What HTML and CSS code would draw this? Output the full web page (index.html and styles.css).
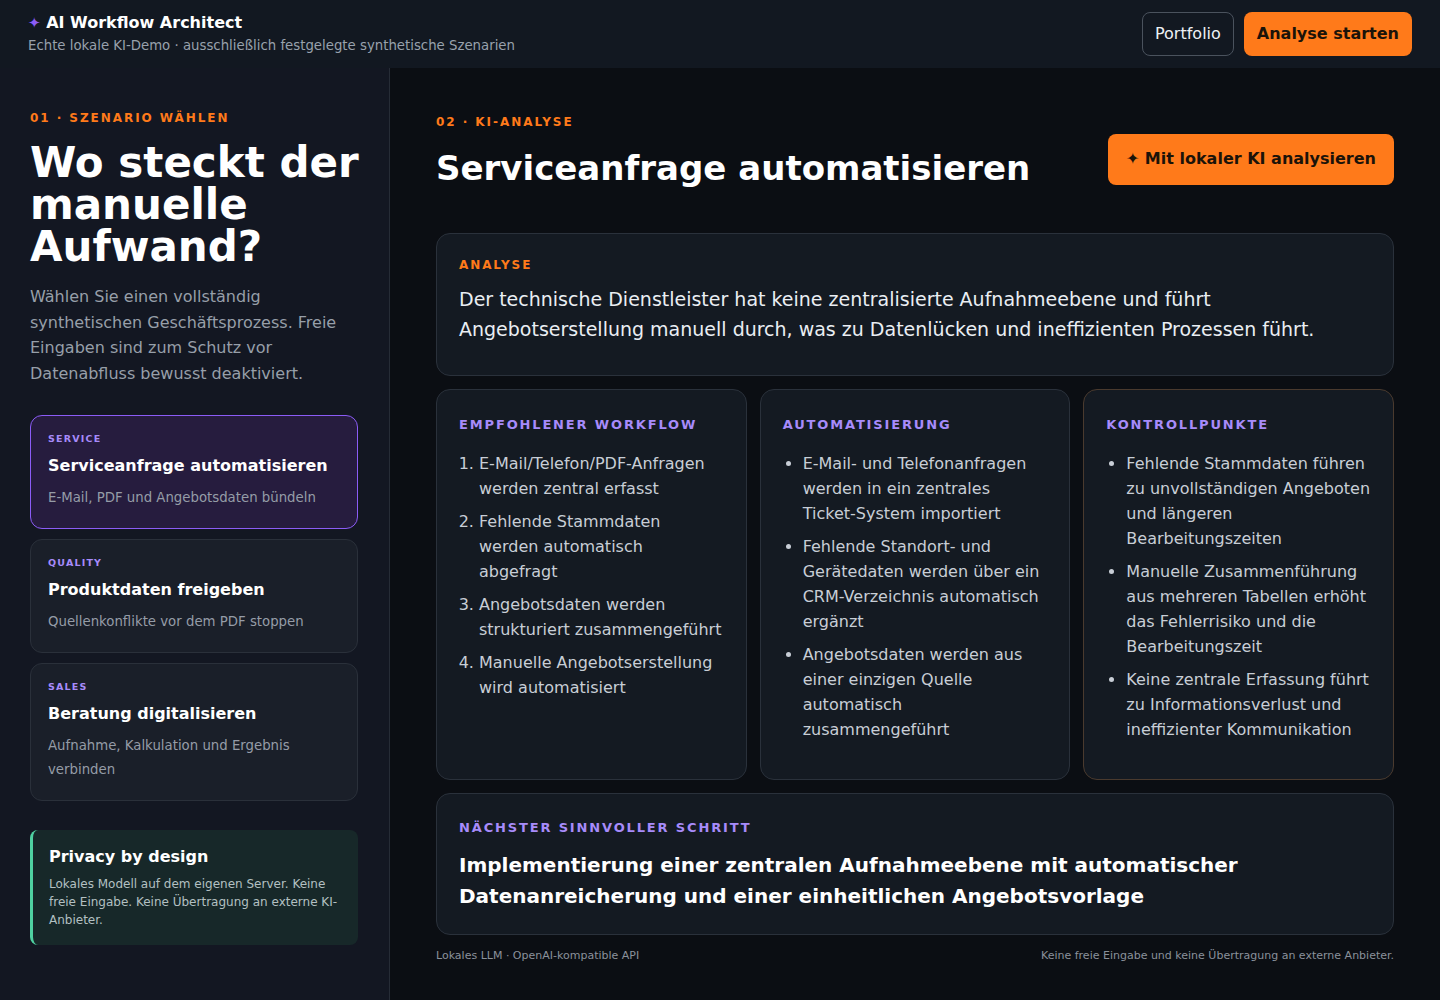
FILE: index.html
```html
<!DOCTYPE html>
<html lang="de">
<head>
    <meta charset="UTF-8">
    <meta name="viewport" content="width=device-width, initial-scale=1.0">
    <title>AI Workflow Architect</title>
    <link rel="stylesheet" href="styles.css">
</head>
<body>
    <header class="topbar">
        <div class="brand">
            <div class="brand-title"><span class="spark">✦</span> AI Workflow Architect</div>
            <div class="brand-sub">Echte lokale KI-Demo · ausschließlich festgelegte synthetische Szenarien</div>
        </div>
        <div class="top-actions">
            <a class="btn btn-ghost" href="#">Portfolio</a>
            <a class="btn btn-primary" href="#">Analyse starten</a>
        </div>
    </header>

    <div class="layout">
        <aside class="sidebar">
            <div class="eyebrow">01 · Szenario wählen</div>
            <h1>Wo steckt der manuelle Aufwand?</h1>
            <p class="lead">Wählen Sie einen vollständig synthetischen Geschäftsprozess. Freie Eingaben sind zum Schutz vor Datenabfluss bewusst deaktiviert.</p>

            <div class="scenarios">
                <div class="scenario active">
                    <div class="tag">Service</div>
                    <div class="scenario-title">Serviceanfrage automatisieren</div>
                    <div class="scenario-desc">E-Mail, PDF und Angebotsdaten bündeln</div>
                </div>
                <div class="scenario">
                    <div class="tag">Quality</div>
                    <div class="scenario-title">Produktdaten freigeben</div>
                    <div class="scenario-desc">Quellenkonflikte vor dem PDF stoppen</div>
                </div>
                <div class="scenario">
                    <div class="tag">Sales</div>
                    <div class="scenario-title">Beratung digitalisieren</div>
                    <div class="scenario-desc">Aufnahme, Kalkulation und Ergebnis verbinden</div>
                </div>
            </div>

            <div class="privacy">
                <div class="privacy-title">Privacy by design</div>
                <p>Lokales Modell auf dem eigenen Server. Keine freie Eingabe. Keine Übertragung an externe KI-Anbieter.</p>
            </div>
        </aside>

        <main class="main">
            <div class="main-head">
                <div>
                    <div class="eyebrow">02 · KI-Analyse</div>
                    <h2>Serviceanfrage automatisieren</h2>
                </div>
                <button class="btn btn-primary btn-big" type="button">✦ Mit lokaler KI analysieren</button>
            </div>

            <section class="card analysis">
                <div class="card-label orange">Analyse</div>
                <p>Der technische Dienstleister hat keine zentralisierte Aufnahmeebene und führt Angebotserstellung manuell durch, was zu Datenlücken und ineffizienten Prozessen führt.</p>
            </section>

            <div class="columns">
                <section class="card col">
                    <h3 class="card-label">Empfohlener Workflow</h3>
                    <ol>
                        <li>E-Mail/Telefon/PDF-Anfragen werden zentral erfasst</li>
                        <li>Fehlende Stammdaten werden automatisch abgefragt</li>
                        <li>Angebotsdaten werden strukturiert zusammengeführt</li>
                        <li>Manuelle Angebotserstellung wird automatisiert</li>
                    </ol>
                </section>
                <section class="card col">
                    <h3 class="card-label">Automatisierung</h3>
                    <ul>
                        <li>E-Mail- und Telefonanfragen werden in ein zentrales Ticket-System importiert</li>
                        <li>Fehlende Standort- und Gerätedaten werden über ein CRM-Verzeichnis automatisch ergänzt</li>
                        <li>Angebotsdaten werden aus einer einzigen Quelle automatisch zusammengeführt</li>
                    </ul>
                </section>
                <section class="card col warn">
                    <h3 class="card-label">Kontrollpunkte</h3>
                    <ul>
                        <li>Fehlende Stammdaten führen zu unvollständigen Angeboten und längeren Bearbeitungszeiten</li>
                        <li>Manuelle Zusammenführung aus mehreren Tabellen erhöht das Fehlerrisiko und die Bearbeitungszeit</li>
                        <li>Keine zentrale Erfassung führt zu Informationsverlust und ineffizienter Kommunikation</li>
                    </ul>
                </section>
            </div>

            <section class="card next">
                <div class="card-label">Nächster sinnvoller Schritt</div>
                <p>Implementierung einer zentralen Aufnahmeebene mit automatischer Datenanreicherung und einer einheitlichen Angebotsvorlage</p>
            </section>

            <footer class="foot">
                <span>Lokales LLM · OpenAI-kompatible API</span>
                <span>Keine freie Eingabe und keine Übertragung an externe Anbieter.</span>
            </footer>
        </main>
    </div>
</body>
</html>
```

FILE: styles.css
```css
* {
    box-sizing: border-box;
}
body {
    margin: 0;
    font-family: "DejaVu Sans", Verdana, sans-serif;
    background-color: #0b0e13; /* main canvas */
    color: #e8ecf1;
}

/* top bar */
.topbar {
    height: 68px;
    padding: 12px 28px 0 28px;
    display: flex;
    justify-content: space-between;
    align-items: flex-start;
    background-color: #121821;
}
.brand-title {
    font-size: 16px;
    font-weight: bold;
    line-height: 20px;
    margin-top: 1px;
    color: #ffffff;
}
.spark {
    color: #8b5cf6;
    font-size: 15px;
    font-weight: normal;
}
.brand-sub {
    margin-top: 4px;
    font-size: 13.3px;
    line-height: 18px;
    color: #98a1ac;
}
.top-actions {
    display: flex;
    gap: 10px;
}
.btn {
    display: inline-flex;
    align-items: center;
    height: 44px;
    padding: 0 12px 1px 12px;
    border-radius: 8px;
    font-family: inherit;
    font-size: 16px;
    line-height: 18px;
    text-decoration: none;
    cursor: pointer;
}
.btn-ghost {
    border: 1px solid #4a525d;
    color: #eef1f5;
}
.btn-primary {
    border: none;
    background-color: #ff7a1a;
    color: #1b1309;
    font-weight: bold;
    padding: 0 13px 1px 13px;
}
.btn-big {
    height: 51px;
    padding: 0 18px 1px 18px;
    margin-bottom: 3px;
}

/* two columns */
.layout {
    display: grid;
    grid-template-columns: 390px 1fr;
    min-height: 932px;
}
.sidebar {
    background-color: #131722;
    border-right: 1px solid #262c36;
    padding: 42px 28px 30px 30px;
}
.eyebrow {
    font-size: 12px;
    line-height: 16px;
    font-weight: bold;
    letter-spacing: 1.95px;
    text-transform: uppercase;
    color: #ff7a1a;
}
h1 {
    margin: 16px 0 0 0;
    font-size: 42px;
    line-height: 42px;
    color: #ffffff;
}
.lead {
    margin: 16px 0 0 0;
    font-size: 16px;
    line-height: 25.7px;
    color: #979fa9;
}
.scenarios {
    margin-top: 28px;
    margin-right: 3px;
    display: flex;
    flex-direction: column;
    gap: 10px;
}
.scenario {
    padding: 16px 18px 18px 17px;
    border: 1px solid #2a303a;
    border-radius: 12px;
    background-color: #1a1f29;
}
.scenario.active {
    background-color: #261c3e;
    border-color: #8b5cf6;
}
.tag {
    font-size: 9.5px;
    line-height: 14px;
    font-weight: bold;
    letter-spacing: 1.2px;
    text-transform: uppercase;
    color: #a78bfa;
}
.scenario-title {
    margin-top: 10px;
    font-size: 16px;
    line-height: 20px;
    font-weight: bold;
    color: #ffffff;
}
.scenario-desc {
    margin-top: 10px;
    font-size: 13.3px;
    line-height: 24px;
    color: #959ca7;
}
.privacy {
    margin-top: 29px;
    margin-right: 3px;
    padding: 17px 18px 16px 16px;
    border-left: 3px solid #4fd1a1;
    border-radius: 8px;
    background-color: #172829;
}
.privacy-title {
    font-size: 16px;
    line-height: 20px;
    font-weight: bold;
    color: #ffffff;
}
.privacy p {
    margin: 8px 0 0 0;
    font-size: 12px;
    line-height: 18px;
    color: #b3c0c2;
}

/* main area */
.main {
    padding: 46px 46px 30px 46px;
    display: flex;
    flex-direction: column;
}
.main-head {
    display: flex;
    justify-content: space-between;
    align-items: flex-end;
}
h2 {
    margin: 18px 0 0 0;
    font-size: 34px;
    line-height: 40px;
    color: #ffffff;
}
.card {
    background-color: #141a22;
    border: 1px solid #2a313b;
    border-radius: 14px;
}
.card-label {
    margin: 0;
    font-size: 13px;
    line-height: 16px;
    font-weight: bold;
    letter-spacing: 1.85px;
    text-transform: uppercase;
    color: #a78bfa;
}
.card-label.orange {
    font-size: 12px;
    letter-spacing: 1.9px;
    color: #ff7a1a;
}
.analysis {
    margin-top: 45px;
    padding: 23px 22px 31px 22px;
}
.analysis p {
    margin: 11px 0 0 0;
    font-size: 19px;
    line-height: 30px;
    color: #eaeef3;
}
.columns {
    margin-top: 13px;
    display: grid;
    grid-template-columns: 1fr 1fr 1fr;
    gap: 13px;
}
.col {
    padding: 27px 22px 26px 22px;
}
.col.warn {
    border-color: #4a3a2e;
}
.col ol,
.col ul {
    margin: 18px 0 11px 0;
    padding-left: 20px;
}
.col li {
    font-size: 16px;
    line-height: 25px;
    color: #c8ced6;
    margin-bottom: 8px;
}
.next {
    margin-top: 13px;
    padding: 26px 22px 22px 22px;
}
.next p {
    margin: 14px 0 0 0;
    font-size: 20px;
    line-height: 31px;
    font-weight: bold;
    color: #ffffff;
}
.foot {
    margin-top: 14px;
    display: flex;
    justify-content: space-between;
    font-size: 11px;
    line-height: 14px;
    color: #8a919b;
}
```
